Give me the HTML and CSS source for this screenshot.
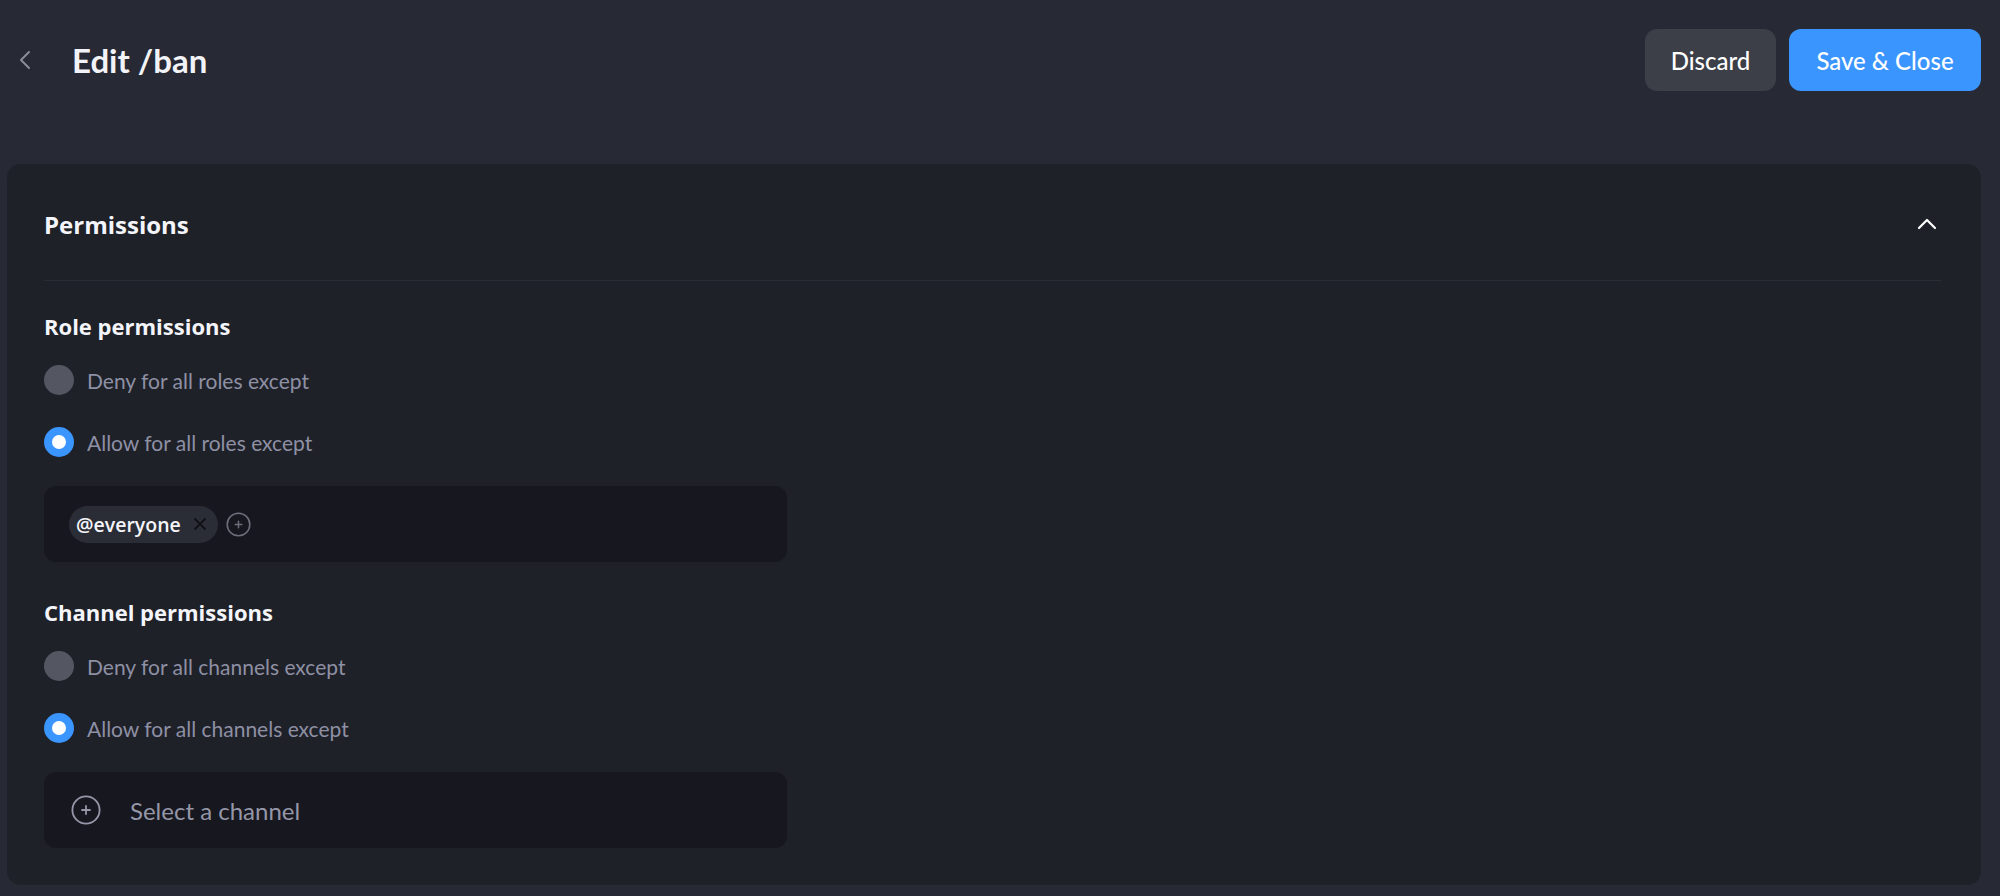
FILE: index.html
```html
<!DOCTYPE html>
<html lang="en">
<head>
<meta charset="utf-8">
<title>Edit /ban</title>
<link rel="stylesheet" href="styles.css">
</head>
<body>
<div class="page">
  <header class="topbar">
    <div class="topbar-left">
      <button class="back" aria-label="Back">
        <svg width="12" height="20" viewBox="0 0 12 20"><path d="M10 2 L2 10 L10 18" fill="none" stroke="#8b8d99" stroke-width="2" stroke-linecap="round" stroke-linejoin="round"/></svg>
      </button>
      <h1 class="title">Edit /ban</h1>
    </div>
    <div class="actions">
      <button class="btn btn-discard">Discard</button>
      <button class="btn btn-save">Save &amp; Close</button>
    </div>
  </header>

  <section class="card">
    <div class="card-head">
      <h2 class="card-title">Permissions</h2>
      <svg class="collapse" width="20" height="12" viewBox="0 0 20 12"><path d="M2 10 L10 2 L18 10" fill="none" stroke="#ffffff" stroke-width="2.2" stroke-linecap="round" stroke-linejoin="round"/></svg>
    </div>

    <div class="group">
      <h3 class="group-title">Role permissions</h3>
      <div class="options">
        <label class="option"><span class="radio"></span><span class="opt-text">Deny for all roles except</span></label>
        <label class="option"><span class="radio radio-on"></span><span class="opt-text">Allow for all roles except</span></label>
      </div>
      <div class="field">
        <span class="chip">@everyone
          <svg width="14" height="14" viewBox="0 0 14 14"><path d="M2 2 L12 12 M12 2 L2 12" stroke="#0c0d10" stroke-width="1.7" stroke-linecap="round"/></svg>
        </span>
        <svg class="add-small" width="25" height="25" viewBox="0 0 25 25"><circle cx="12.5" cy="12.5" r="11.3" fill="none" stroke="#6c6e7a" stroke-width="1.6"/><path d="M12.5 9.2 V15.8 M9.2 12.5 H15.8" stroke="#6c6e7a" stroke-width="1.5" stroke-linecap="round"/></svg>
      </div>
    </div>

    <div class="group">
      <h3 class="group-title">Channel permissions</h3>
      <div class="options">
        <label class="option"><span class="radio"></span><span class="opt-text">Deny for all channels except</span></label>
        <label class="option"><span class="radio radio-on"></span><span class="opt-text">Allow for all channels except</span></label>
      </div>
      <div class="field field-select">
        <svg width="30" height="30" viewBox="0 0 30 30"><circle cx="15" cy="15" r="13.6" fill="none" stroke="#9597a8" stroke-width="1.8"/><path d="M15 11 V19 M11 15 H19" stroke="#9597a8" stroke-width="1.8" stroke-linecap="round"/></svg>
        <span class="placeholder">Select a channel</span>
      </div>
    </div>
  </section>
</div>
</body>
</html>
```

FILE: styles.css
```css
* { box-sizing: border-box; }
html, body {
  margin: 0;
  padding: 0;
  background: #272934;
  font-family: "Lato", "Noto Sans", sans-serif;
  color: #ffffff;
}
.page {
  padding: 0 19px 0 7px;
  min-height: 896px;
}
.topbar {
  height: 164px;
  display: flex;
  justify-content: space-between;
  align-items: flex-start;
  padding-top: 29px;
}
.topbar-left {
  display: flex;
  align-items: center;
  height: 62px;
}
.back {
  background: none;
  border: 0;
  padding: 0;
  margin-left: 12px;
  width: 12px;
  height: 20px;
  display: flex;
  cursor: pointer;
}
.title {
  margin: 0 0 0 41px;
  font-size: 33px;
  font-weight: 700;
  color: #f2f3f8;
}
.actions {
  display: flex;
  gap: 13px;
}
.btn {
  height: 62px;
  border: 0;
  border-radius: 12px;
  font-family: inherit;
  font-size: 24px;
  color: #ffffff;
  font-weight: 500;
  cursor: pointer;
}
.btn-discard {
  width: 131px;
  background: #3c3e48;
}
.btn-save {
  width: 192px;
  background: #3a95ff;
}
.card {
  background: #1f2129;
  border-radius: 14px;
  padding: 0 40px 37px 37px;
}
.card-head {
  height: 117px;
  display: flex;
  align-items: center;
  justify-content: space-between;
  border-bottom: 1px solid #2a2c36;
  padding-top: 4px;
}
.card-title {
  margin: 0;
  font-family: "Open Sans", "Lato", sans-serif;
  font-size: 24px;
  font-weight: 700;
  color: #f4f5fa;
}
.collapse {
  margin-right: 4px;
}
.group {
  padding-top: 30px;
}
.group + .group {
  padding-top: 35px;
}
.group-title {
  margin: 0;
  height: 30px;
  line-height: 30px;
  font-family: "Open Sans", "Lato", sans-serif;
  font-size: 22px;
  font-weight: 700;
  color: #f4f5fa;
}
.options {
  display: flex;
  flex-direction: column;
  gap: 32px;
  margin-top: 24px;
}
.option {
  display: flex;
  align-items: center;
  gap: 13px;
  height: 30px;
}
.radio {
  width: 30px;
  height: 30px;
  border-radius: 50%;
  background: #545662;
  flex: none;
}
.radio-on {
  background: #ffffff;
  border: 8px solid #3a95ff;
}
.opt-text {
  font-size: 21px;
  color: #8e90a4;
}
.field {
  margin-top: 29px;
  width: 743px;
  height: 76px;
  background: #17181f;
  border-radius: 12px;
  display: flex;
  align-items: center;
  padding-left: 25px;
  gap: 8px;
}
.chip {
  height: 37px;
  display: inline-flex;
  align-items: center;
  gap: 12px;
  padding: 0 11px 0 7px;
  background: #2b2d36;
  border-radius: 19px;
  font-family: "Open Sans", "Lato", sans-serif;
  font-size: 19.5px;
  font-weight: 600;
  color: #f4f5fa;
}
.field-select {
  padding-left: 27px;
  gap: 29px;
}
.placeholder {
  font-size: 24px;
  color: #9597a8;
}
```
